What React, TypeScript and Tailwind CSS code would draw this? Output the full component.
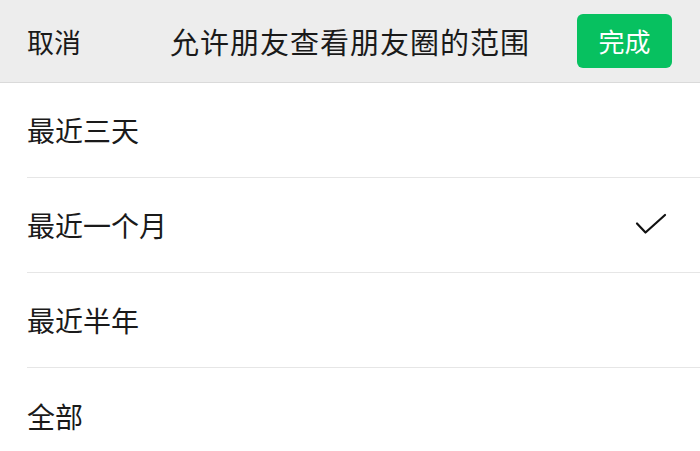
import React from 'react';

const OPTIONS = ['最近三天', '最近一个月', '最近半年', '全部'];
const SELECTED = 1;

function Check() {
  return (
    <svg width="32" height="24" viewBox="0 0 32 24" fill="none">
      <path d="M2 10.5 L10.5 19.5 L30 2" stroke="#111" strokeWidth="2.2" strokeLinecap="round" strokeLinejoin="round" />
    </svg>
  );
}

export default function App() {
  return (
    <div
      className="w-[700px] h-[451px] overflow-hidden bg-white text-[#1a1a1a]"
      style={{ fontFamily: '"Noto Sans CJK SC", "Noto Sans", sans-serif' }}
    >
      <header className="relative h-[83px] bg-[#ededed] border-b border-[#dadada] flex items-center justify-between pl-[27px] pr-[28px]">
        <button type="button" className="text-[27px] leading-none">取消</button>
        <h1 className="absolute left-0 right-0 text-center text-[29px] tracking-[1px] leading-none pointer-events-none">
          允许朋友查看朋友圈的范围
        </h1>
        <button
          type="button"
          className="w-[95px] h-[54px] rounded-[6px] bg-[#07c160] text-white text-[26px] leading-none"
        >
          完成
        </button>
      </header>

      <ul>
        {OPTIONS.map((label, i) => (
          <li key={label} className="pl-[27px]">
            <div
              className={`h-[95px] flex items-center justify-between pr-[33px] ${
                i < OPTIONS.length - 1 ? 'border-b border-[#e6e6e6]' : ''
              }`}
            >
              <span className="text-[28px] leading-none">{label}</span>
              {i === SELECTED && <Check />}
            </div>
          </li>
        ))}
      </ul>
    </div>
  );
}
